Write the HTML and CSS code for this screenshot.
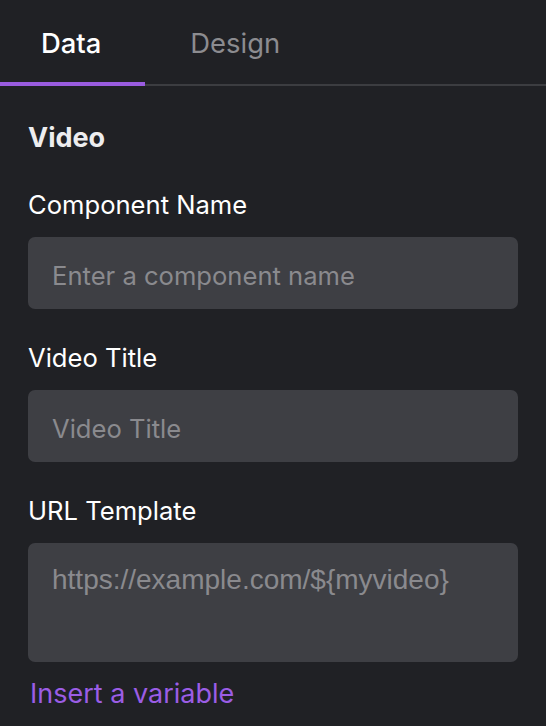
FILE: index.html
```html
<!DOCTYPE html>
<html>
<head>
<meta charset="utf-8">
<link rel="stylesheet" href="styles.css">
</head>
<body>
<div class="panel">
  <div class="tabs">
    <div class="tab active">Data</div>
    <div class="tab">Design</div>
  </div>
  <div class="content">
    <h2 class="section-title">Video</h2>
    <div class="field">
      <label class="label">Component Name</label>
      <input class="input" type="text" placeholder="Enter a component name">
    </div>
    <div class="field">
      <label class="label">Video Title</label>
      <input class="input" type="text" placeholder="Video Title">
    </div>
    <div class="field">
      <label class="label">URL Template</label>
      <textarea class="textarea" placeholder="https://example.com/${myvideo}"></textarea>
      <a class="link">Insert a variable</a>
    </div>
  </div>
</div>
</body>
</html>
```
FILE: styles.css
```css
html, body {
  margin: 0;
  padding: 0;
  background: #202125;
  font-family: Inter, "Noto Sans", sans-serif;
  color: #ffffff;
}
.panel {
  width: 546px;
  height: 726px;
  overflow: hidden;
}
.tabs {
  display: flex;
  border-bottom: 2px solid #3c3d41;
  height: 86px;
  box-sizing: border-box;
}
.tab {
  font-size: 27.4px;
  padding: 0 44px 0 41px;
  line-height: 86px;
  color: #8c8c90;
  position: relative;
}
.tab + .tab {
  padding-left: 45px;
}
.tab.active {
  color: #ffffff;
  font-weight: 500;
}
.tab.active::after {
  content: "";
  position: absolute;
  left: 0;
  right: 0;
  bottom: -2px;
  height: 4px;
  background: #9a5ce0;
}
.content {
  padding: 36px 28px 0 28px;
}
.section-title {
  margin: 0 0 35px;
  font-size: 27px;
  font-weight: 700;
  line-height: 32px;
  color: #ededef;
}
.field {
  display: flex;
  flex-direction: column;
  margin-bottom: 33px;
}
.label {
  font-size: 25.6px;
  line-height: 32px;
  margin-bottom: 16px;
  color: #ffffff;
}
.input, .textarea {
  box-sizing: border-box;
  width: 490px;
  border: none;
  border-radius: 7px;
  background: #3e3f44;
  color: #ffffff;
  padding: 0 24px;
  outline: none;
  margin: 0;
}
.input {
  height: 72px;
  padding-top: 4px;
  font-family: Inter, "Noto Sans", sans-serif;
  font-size: 25.6px;
}
.input::placeholder {
  color: #8a8a8e;
}
.textarea {
  height: 119px;
  resize: none;
  padding: 21px 24px 0;
  font-family: "Liberation Sans", Arial, sans-serif;
  font-size: 28px;
  line-height: normal;
  display: block;
}
.textarea::placeholder {
  color: #8a8a8e;
}
.link {
  margin-top: 16px;
  margin-left: 2px;
  font-size: 27px;
  line-height: 32px;
  color: #9b5de5;
}
```
